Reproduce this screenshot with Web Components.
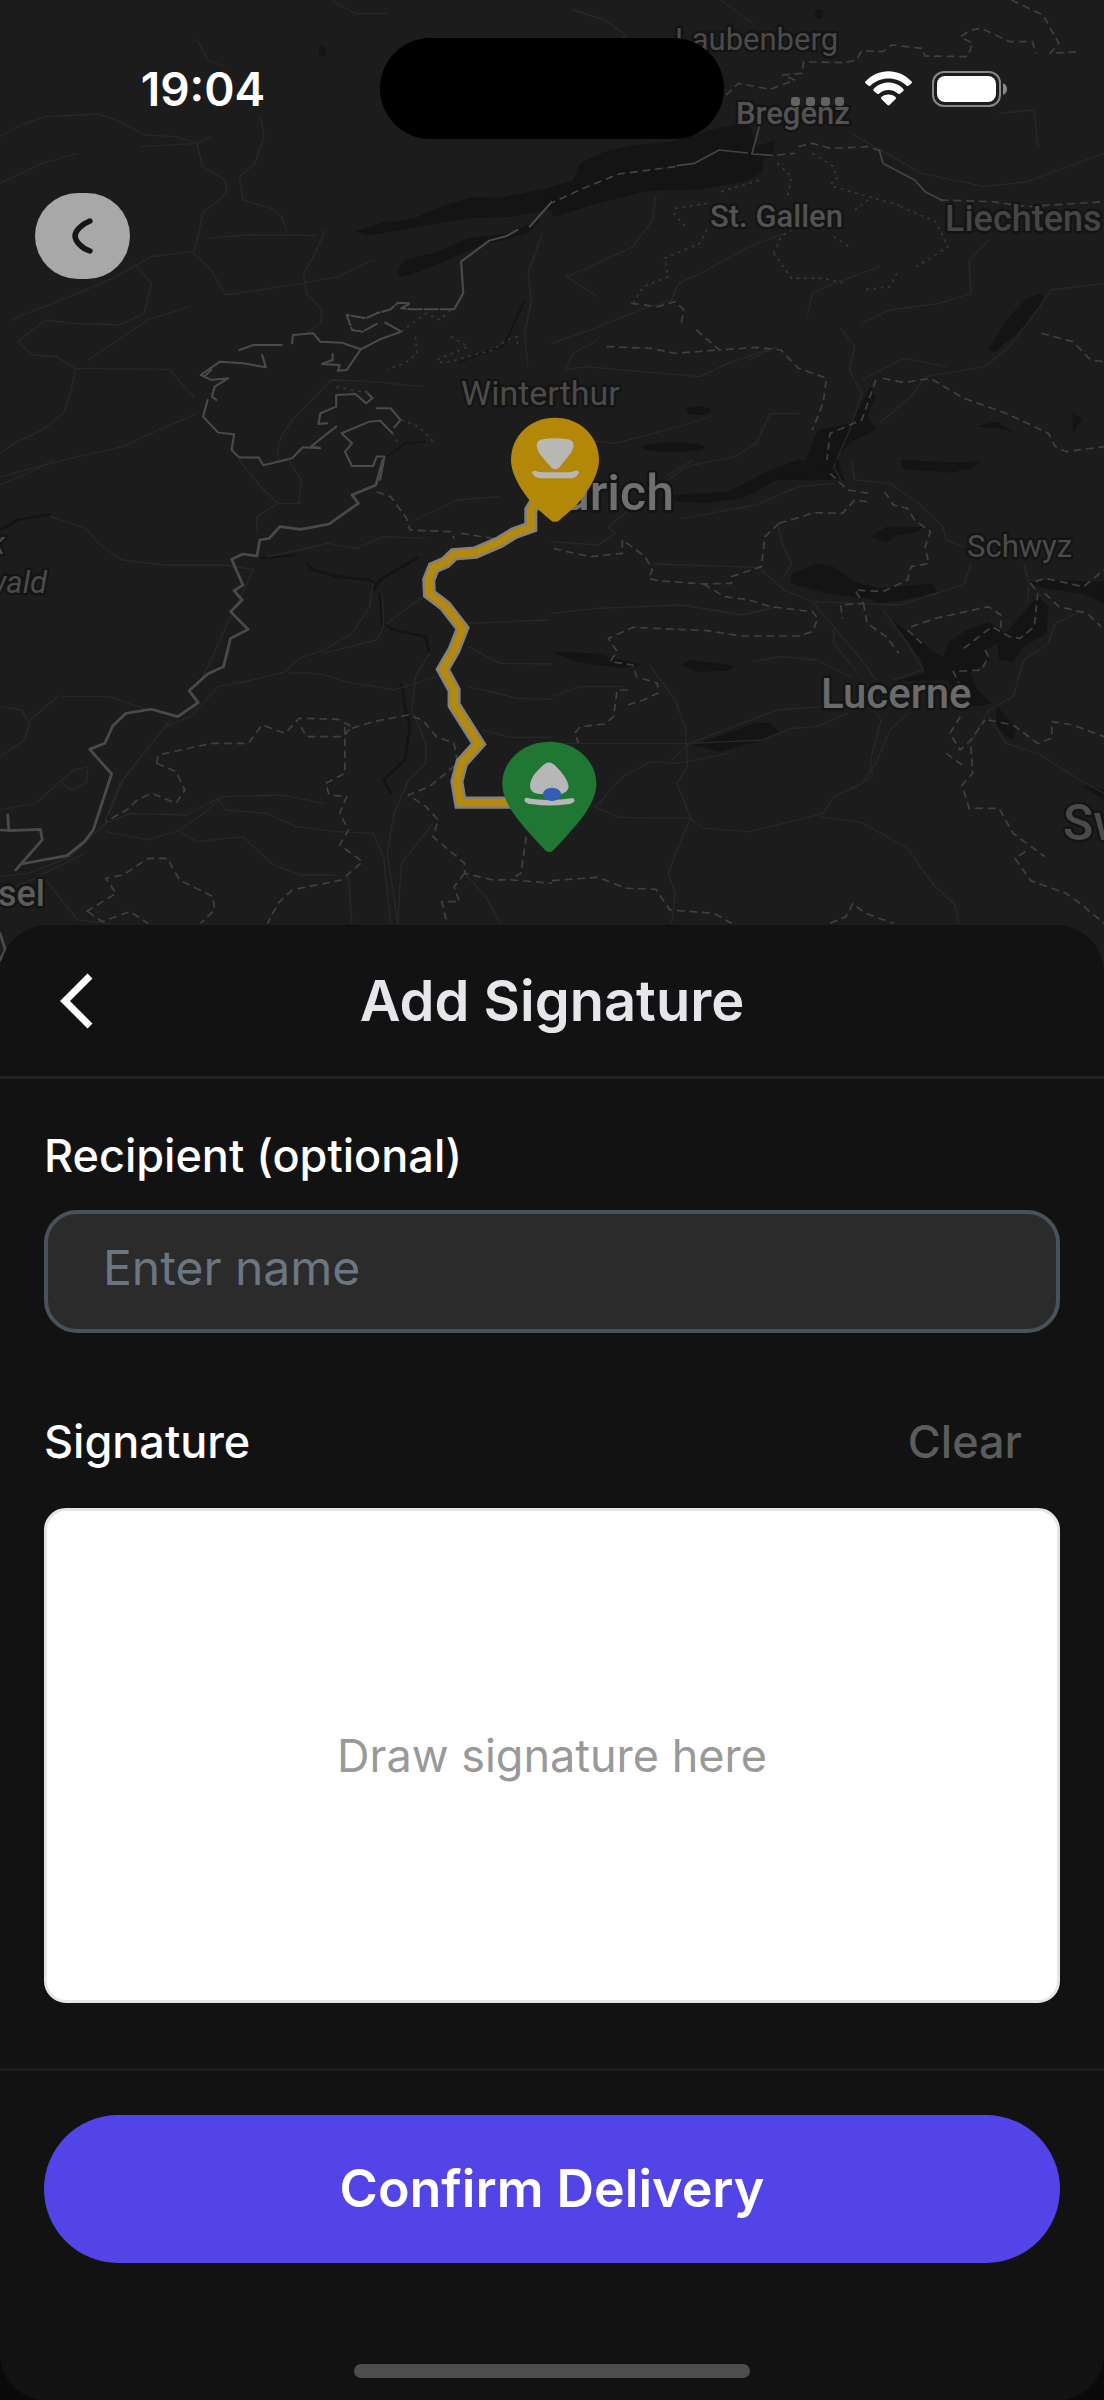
<!DOCTYPE html>
<html lang="en">
<head>
<meta charset="utf-8">
<meta name="viewport" content="width=device-width, initial-scale=1">
<title>Add Signature</title>
<style>
  html { background: #0a0a0a; }
  body { margin: 0; font-family: Inter, "Noto Sans", sans-serif; color: #fff; }
</style>
</head>
<body>
<delivery-screen>
  <route-map slot="map"></route-map>
  <status-bar slot="status" time="19:04"></status-bar>
  <round-back slot="back"></round-back>
  <bottom-sheet heading="Add Signature">
    <text-field label="Recipient (optional)" placeholder="Enter name"></text-field>
    <signature-pad label="Signature" placeholder="Draw signature here"></signature-pad>
    <primary-button slot="action">Confirm Delivery</primary-button>
  </bottom-sheet>
</delivery-screen>

<script>
class Base extends HTMLElement {
  constructor() { super(); this.attachShadow({ mode: "open" }); }
  connectedCallback() {
    this.shadowRoot.innerHTML = this.render();
    this.ready();
  }
  attr(n) { return this.getAttribute(n) || ""; }
  ready() {}
}

customElements.define("delivery-screen", class extends Base {
  render() { return `
    <style>
      :host { display: flex; flex-direction: column; min-height: 100vh; }
      .hero { display: grid; height: 985px; margin-bottom: -60px; overflow: hidden; background: #1c1c1c; }
      .hero > * { grid-area: 1 / 1; min-width: 0; }
      .over { display: flex; flex-direction: column; align-items: stretch; gap: 54px; padding-top: 38px; z-index: 1; }
      ::slotted(bottom-sheet) { flex: 1; }
    </style>
    <section class="hero">
      <div><slot name="map"></slot></div>
      <div class="over"><slot name="status"></slot><slot name="back"></slot></div>
    </section>
    <slot></slot>`; }
});

customElements.define("status-bar", class extends Base {
  render() { return `
    <style>
      :host { display: grid; grid-template-columns: 1fr auto 1fr; align-items: center; }
      time { text-align: center; padding-left: 26px; font-size: 46px; line-height: 56px; font-weight: 600; }
      .island { width: 344px; height: 101px; border-radius: 51px; background: #000; }
      .icons { display: flex; justify-content: flex-end; align-items: center; gap: 20px; padding-right: 97px; }
      svg { display: block; }
    </style>
    <time>${this.attr("time")}</time>
    <div class="island"></div>
    <div class="icons">
      <svg width="54" height="36" viewBox="0 0 54 36" fill="#626262">
        <rect x="0" y="26" width="9" height="9" rx="3"/><rect x="15" y="26" width="9" height="9" rx="3"/>
        <rect x="30" y="26" width="9" height="9" rx="3"/><rect x="44" y="26" width="9" height="9" rx="3"/>
      </svg>
      <svg width="47" height="35" viewBox="0 0 132 106" preserveAspectRatio="none" fill="#fff">
        <path d="M1 32C37-10 95-10 131 32Q133 35 130 38L122 45Q119 47 116 44C89 16 43 16 16 44Q13 47 10 45L2 38Q-1 35 1 32Z"/>
        <path d="M24 55C46 28 86 28 108 55Q110 58 108 60L98 69Q95 71 92 68C77 54 55 54 40 68Q37 71 34 69L24 60Q22 58 24 55Z"/>
        <path d="M46 79C57 69 75 69 86 79Q88 82 86 85L69 103Q66 106 63 103L46 85Q44 82 46 79Z"/>
      </svg>
      <svg width="75" height="36" viewBox="0 0 75 36">
        <rect x="1" y="1" width="67" height="34" rx="11" fill="none" stroke="#8b8787" stroke-width="2"/>
        <rect x="5" y="5" width="59" height="26" rx="8" fill="#fff"/>
        <path d="M71 12Q75 14 75 18Q75 22 71 24Z" fill="#8b8787"/>
      </svg>
    </div>`; }
});

customElements.define("round-back", class extends Base {
  render() { return `
    <style>
      :host { display: block; padding-left: 35px; }
      button { display: grid; place-items: center; width: 95px; height: 86px; padding: 0; border: 0; border-radius: 43px; background: #a8a8a8; cursor: pointer; }
    </style>
    <button type="button" aria-label="Back">
      <svg width="95" height="86" viewBox="0 0 270 258" preserveAspectRatio="none" fill="none" stroke="#161616" stroke-width="16" stroke-linecap="round" stroke-linejoin="round">
        <path d="M156 84C132 94 114 114 114 129C114 144 132 166 156 174"/>
      </svg>
    </button>`; }
});

/* The four map quarters are each drawn in their own tile units, scaled onto the canvas. */
customElements.define("route-map", class extends Base {
  render() { return `
    <style>
      :host { display: block; }
      svg { display: block; width: 100%; height: 985px; background: #1c1c1c; }
      .l { fill: none; stroke-linejoin: round; stroke-linecap: round; }
      .border { stroke: #4a4a4a; stroke-width: 6; }
      .dash { stroke: #404040; stroke-width: 5; stroke-dasharray: 22 14; stroke-linecap: butt; }
      .dot { stroke: #363636; stroke-width: 5; stroke-dasharray: 8 13; stroke-linecap: butt; }
      .road { stroke: #272727; stroke-width: 4; }
      .lake { fill: #141414; }
      .river { fill: none; stroke: #141414; stroke-width: 8; stroke-linejoin: round; }
      text { font-family: Roboto, "Noto Sans", sans-serif; fill: #525252; stroke: #141414; stroke-width: 5px; paint-order: stroke; stroke-linejoin: round; }
      .town { font-size: 31px; } .wide { font-size: 34px; }
      .mid { font-weight: 500; }
      .city { font-size: 42px; font-weight: 500; fill: #6a6a6a; }
      .big { font-size: 50px; font-weight: 500; fill: #707070; }
      .land { font-size: 36px; font-weight: 500; fill: #454545; }
      .dim { fill: #4b4b4b; }
    </style>
    <svg viewBox="0 0 1104 985" preserveAspectRatio="xMidYMin slice" role="img" aria-label="Delivery route map">
      <g transform="scale(.352 .3333)">
        <path class="lake" d="M1010 695L1085 668L1180 655L1250 620L1345 590L1420 595L1568 560V628L1450 650L1330 655L1200 678L1050 706ZM1125 820L1150 780L1230 760L1330 715L1450 700L1540 655L1500 700L1370 735L1270 780L1200 812L1140 832Z"/>
        <ellipse class="lake" cx="916" cy="152" rx="11" ry="16"/>
        <g class="l road">
          <path d="M0 410L60 375L130 350L280 342L340 365L410 405L500 410L560 430L575 500L640 540L645 580L575 640L565 700L550 755L430 770L330 830L220 880L30 960M740 350L750 410L725 490L680 530L690 600L770 625L800 650L815 690M590 715L700 705L900 706M0 550L120 490L220 460M925 690L890 770L862 820L870 880L915 930L910 970L870 1000M380 790L430 850L410 940L340 975L210 970L130 960L50 1025L90 1065L160 1070L215 1105L200 1180L180 1240L120 1290L40 1330L0 1360M550 760L600 810L640 885L800 860L960 830L1060 780M0 1430L220 1370L350 1340L450 1290L560 1240M215 1105L480 1108L550 1190M250 1080L420 960L540 920M790 1380Q780 1310 850 1240L940 1140L1060 1145L1200 1160M1540 700L1500 820L1510 900L1490 1000L1500 1100M400 440L560 430L600 410M560 120L590 180L640 200M940 0L1010 40L1100 40"/>
        </g>
        <path class="river" style="stroke-width:5" d="M1300 1090L1380 1055L1430 1040L1465 960L1490 900M1100 1370L1150 1330L1210 1325"/>
        <g class="l border">
          <path d="M1568 605L1505 680M1470 690L1440 708L1390 722L1310 785L1316 880L1292 925M570 1125L600 1140L648 1135L610 1160L602 1190L615 1200M590 1200L577 1250L620 1298L665 1303L658 1350L680 1373L735 1373L748 1396L830 1375L860 1342L910 1345L885 1338L955 1280M955 1220V1185L1010 1182L1040 1210L1058 1195L1040 1175M905 1270L910 1240L950 1222M905 1272L930 1270M1070 1225H1110L1138 1260L1120 1282M970 1300L1050 1265L1080 1262L1115 1300M970 1300L1000 1330L980 1355L1000 1398H1060L1070 1370H1092L1080 1440M570 1125L625 1085L690 1090L755 1102L745 1065M680 1050L720 1035L800 1035M830 1030L832 1005L890 1000L910 1025L970 1028L1025 1048L985 1110L960 1112L965 1095L915 1092L945 1080L945 1062M1025 1048L1080 1018L1140 995L1095 968"/>
          <path stroke-dasharray="38 8" d="M1290 928H1170L1140 925L1165 910L1130 908L1110 928L1070 940L1040 955L985 945L1000 990L1030 995L1070 972M580 1130L600 1110"/>
        </g>
        <g class="l dot"><path d="M1140 995L1210 940L1250 960L1280 930M1180 1010L1185 1060L1150 1090L1100 1108M1280 1010L1330 1040L1240 1080L1260 1090L1400 1050L1440 1020L1470 1010V1040M1140 1260L1190 1280L1230 1325M955 1160L1050 1180M1115 1300L1130 1330"/></g>
      </g>

      <g transform="translate(552) scale(.352 .3333)">
        <path class="lake" d="M60 540L80 490L150 455L230 435L340 425L470 385L560 370L580 440L635 420L625 470L600 475L595 520L540 545L430 568L270 572L130 610L0 652V560ZM1390 880L1398 900L1340 980L1260 1055L1240 1050L1290 960L1350 895ZM905 1160L920 1190L895 1250L920 1290L850 1325L810 1370L830 1440H600L720 1385L755 1290L850 1270L880 1210ZM990 1380L1080 1392L1215 1385L1190 1408L1090 1412L1000 1400ZM1210 1280L1260 1265L1320 1300L1270 1285ZM1480 1235L1505 1260L1480 1300Z"/>
        <ellipse class="lake" cx="758" cy="42" rx="12" ry="16"/><ellipse class="lake" cx="345" cy="1342" rx="90" ry="15"/><ellipse class="lake" cx="415" cy="1232" rx="36" ry="13"/>
        <g class="l road"><path d="M295 590L285 660L230 740L110 800L40 830L130 890M0 1030L120 985L250 930L340 900L360 850L440 810L560 740L660 700M725 950L740 880L800 850L930 800M1240 720L1185 780L1190 880L1100 910L960 930L880 970M820 985L860 1040L845 1110L880 1180L850 1280L800 1400L820 1440M560 1080L640 1040L500 1090L420 1130L250 1115L100 1100L35 1110L60 1060L130 1020M0 1310L180 1330L360 1280L450 1250M620 1240L700 1240M620 1240L580 1330L520 1370L380 1400L330 1440M880 1140L1000 1075L1120 1100M930 1270L1020 1190L1060 1130L1230 1100L1300 1040L1420 870L1568 850M1568 460L1490 490L1350 545L1230 560L1050 520L850 400M1380 440L1370 330L1270 340M0 320L120 200L210 105L150 60L60 30M480 0L570 70"/></g>
        <g class="l dash">
          <path d="M495 285L530 250L620 268L690 240L655 225L710 220L715 185L830 188L865 180L880 152L940 155L965 135L1050 145L1060 168L1180 170L1195 130L1160 110L1190 90L1220 85L1300 125H1365L1375 160M1305 0L1395 45L1440 130L1415 160L1500 155M1105 600L1250 605L1350 620L1568 605M640 465L690 460M700 440L740 430L790 445L900 440L935 455M225 910L300 920L350 905L375 930L365 980M410 990L475 1050L580 1042L650 1050L700 1105L780 1135L770 1210L740 1290M155 1040L280 1045L350 1060L475 1050M940 1135L1000 1148L1075 1135L1170 1195L1290 1240L1410 1300L1430 1340L1460 1355L1568 1340M920 1140L880 1260L790 1300L780 1390L750 1400M1390 1000L1480 1025L1530 1080L1568 1085"/>
          <path style="stroke:#444" d="M350 500L190 522L100 560L0 608"/>
        </g>
        <path class="l" stroke="#444" stroke-width="5" d="M590 375L568 462L625 466M555 459L475 450L405 490L355 497M930 450L940 490L1030 540L1060 575L1110 602"/>
        <g class="l dot"><path d="M345 640L380 680M440 690L420 730L320 775L330 830L260 860L230 910M640 490L680 530L670 590M740 460L800 500L810 540L785 555M630 760L680 835L770 835L830 850M860 630L910 590M990 620L1090 665L1125 740L1040 798H1020M980 820L960 860L880 870M350 625L440 610M480 575L590 540M800 560L1000 620M630 760L650 710L680 690M800 710L850 745"/></g>
      </g>

      <g transform="translate(0 460) scale(.352 .3333)">
        <path class="river" d="M0 210L50 180L145 162M740 295L840 285M870 310L890 330L960 350L1050 360L1075 380M1060 390L1080 360L1190 290M1080 400L1085 490L1120 510L1210 530L1220 580M1140 670L1150 740L1165 800L1150 900L1090 960L1110 1000"/>
        <g class="l road">
          <path d="M0 75L100 30L150 0M145 170L245 205L280 250L345 300L470 315L640 315L720 330L650 480L600 600L560 680M680 0L740 80L790 130L850 130L855 60L820 0M760 290L850 270L930 250L1010 265L1090 230L1210 235M730 220V170L790 130M1060 370L1050 440L1000 520L920 570L850 595L810 635L720 660L620 680L540 770L470 800L340 970L300 1080M1085 400L1090 500L1070 540L920 580M820 640Q900 630 980 665L1120 690L1240 650M1100 490L1200 410M180 710H310L420 750M0 740L60 750L85 790L70 840L0 890M85 780L170 705M0 1050L100 1030L210 930L250 920L245 970L200 990L170 960M0 1250L80 1240L200 1190L300 1090L370 1060L530 1065L620 1015L640 1050L760 1060L840 1100L950 1115L1060 1120L1090 1190L1110 1390M300 1115L420 1140L500 1115L580 1060L630 1010L800 1005L920 1030M500 1110L560 1145L690 1130L770 1210L850 1245L950 1245M480 785L350 960L310 1060M0 1300L90 1260L240 1180M1220 580L1180 650L1170 750L1210 850V910L1160 960L1120 1060L1100 1180L1130 1390M1230 1090L1140 1210L1130 1390M1330 560L1420 610L1568 612M1330 680L1470 715L1568 718M1370 810L1450 832H1568M1180 180L1300 120L1420 110M1320 1240L1380 1310L1420 1390M990 1250L1000 1390M130 1260L220 1380L310 1390M1330 490L1560 480"/>
        </g>
        <g class="l border">
          <path style="stroke-width:8" d="M1088 0L1068 75L1000 105L1018 130L935 192L855 208L795 200L765 235L738 240L730 288L690 282L658 298L690 375L665 392L688 420L655 455L705 508L655 535L635 620L590 642L537 692L563 728L505 770L430 748L358 760L320 798L298 850L255 868L317 942L265 1110L240 1145L190 1187L60 1212L120 1140L115 1108L25 1112L22 1065M0 1110L35 1112M60 1212L45 1230M0 1500L15 1470L0 1420"/>
        </g>
        <g class="l dash">
          <path d="M1070 95L1110 110L1155 175L1165 210L1280 215L1290 235M1310 220L1430 240M445 910L500 935L525 990L500 1030L430 1000L390 1020L360 1050L300 1085M445 910L450 885L600 850H705L745 795L810 820L850 775L960 778L1000 800L975 830L870 830L850 790M980 800L980 940L925 970L935 1005L985 1010L965 1060L990 1110L965 1155L1030 1205L970 1260L830 1290L790 1330L760 1390M1000 805L1060 785L1160 765L1200 780L1240 830L1290 850L1300 910L1220 980L1160 1005L1210 1040L1245 1080L1230 1130L1320 1210V1240L1400 1260H1455L1568 1270M1495 1130L1480 1240L1455 1255M1320 1240L1290 1280L1305 1325H1255L1270 1390M245 1355L330 1300L300 1255L350 1245L420 1195L475 1195L510 1260L605 1310L610 1350L570 1390M250 1355L290 1385L370 1355L420 1390"/>
        </g>
      </g>

      <g transform="translate(552 460) scale(.352 .3333)">
        <path class="lake" d="M350 125L345 105L500 95L620 30L700 0H830L740 35L640 60L540 115L440 128ZM990 0L1215 10L1140 38L1000 28ZM905 230L950 200L1050 200L1040 215L980 225L950 248ZM680 345L750 310L800 320L860 365L930 385L1080 370L1095 395L1000 420L930 430L900 415L850 410L780 400L680 370ZM0 575L120 580L260 615L200 625L70 605ZM365 615L400 600L520 618L500 632L410 635ZM400 855L470 830L580 788L620 790L645 815L580 845L480 875ZM965 480L1050 545L1110 595L1130 545L1170 515L1240 485L1290 520L1345 450L1380 410L1410 440L1405 520L1340 560L1310 605L1270 600L1265 550L1230 570L1240 600L1190 640L1210 690L1250 730L1200 740L1120 660L970 665L1060 640L1050 600ZM1265 740L1320 800L1310 840L1290 830L1260 790ZM1350 370L1400 360L1568 365V430L1500 400L1400 385ZM1500 975L1568 990V1020Z"/>
        <g class="l road"><path d="M330 45L400 0M0 460L130 445L370 435L540 465L640 440M290 312L590 322M0 245L130 255L180 220L160 200L220 150M370 175L580 135L700 80L800 70M640 190L655 250L680 310L660 350M595 330L660 390L740 425L800 500L880 600L920 660M740 425L850 430L990 435L1090 400L1170 375L1190 315M1340 310L1355 370L1350 430M940 450L1010 550L1055 630L970 660M800 510V550L870 640M0 710L80 680L200 680M570 605L650 590L750 600L850 650M380 855L640 750L770 740M340 900L390 850L600 840L680 805L750 800L840 760M280 620L350 720L380 810L385 920L355 970L395 1075L370 1130L330 1240L350 1300L340 1390M125 1040L200 950L280 905L360 910L500 880M0 850L390 850M120 1040L190 1072L390 1075L430 1105L560 1115L700 1080L770 1060L800 1010L880 970L920 910L960 810L1010 760M900 730L935 780L905 900L910 950L850 990M760 1070L880 1088L1010 1165L1080 1270L1145 1335L1155 1390M1510 450L1430 490L1410 550L1340 600L1310 710L1240 750L1190 850M1240 770L1290 850L1380 880L1500 960L1568 1000M850 0L860 60L960 70L1040 130L1110 200L1120 240L1170 260"/></g>
        <g class="l dash"><path d="M790 40L840 90L900 100M645 190L710 170L740 158L825 160L860 120L900 125M645 190L605 230L595 320L510 350V370L430 372L300 362L275 355L285 330L265 290L200 240V280L110 290L0 265M430 372L490 410L560 420L620 440L740 455L755 475L740 515L700 528H540L440 512L230 502L160 535L185 575L165 605L230 615L240 650L300 670V700L260 720L215 735M215 690H185L175 770L150 792L80 800L65 820L75 850M945 95L970 135L1010 145L1030 180L1075 215L1060 260L1070 310L1020 320L1010 360L940 395L860 390L885 430L820 435L825 475M885 430L895 490L950 530L985 580M1010 510L1050 550M1020 500L1090 475L1240 440L1275 465L1275 510M1170 565L1250 500L1300 530L1330 535L1370 500L1380 400L1360 370L1400 355L1510 380L1568 330M1400 400L1440 440L1520 460L1560 500M1230 570L1240 590L1220 630L1140 635L1160 680M1160 770L1130 820L1160 870L1190 840L1230 780M1120 880L1165 915M1190 860L1195 940L1165 975L1185 1045H1270L1310 1120L1400 1190M1345 1175L1315 1195L1360 1262L1460 1300L1500 1330L1568 1390M1240 780L1310 795L1380 850L1420 835V785L1480 795L1568 830M0 1262L130 1252L210 1285L295 1288L335 1350L460 1360L510 1390M790 1390L835 1370L855 1330L890 1360L970 1390"/></g>
      </g>

      <g class="l" transform="translate(0 460) scale(.352 .3333)">
        <path stroke="#85817a" stroke-width="37" style="stroke-linejoin:miter;stroke-linecap:butt" d="M1525 120L1508 150V202L1460 220L1420 246L1350 278L1290 283L1265 308L1232 323L1218 360L1220 402L1265 438L1314 505L1290 570L1258 628L1290 690V735L1360 852L1312 908L1298 965L1308 1028H1480"/>
        <path stroke="#b38a0d" stroke-width="22" style="stroke-linejoin:miter;stroke-linecap:butt" d="M1525 120L1508 150V202L1460 220L1420 246L1350 278L1290 283L1265 308L1232 323L1218 360L1220 402L1265 438L1314 505L1290 570L1258 628L1290 690V735L1360 852L1312 908L1298 965L1308 1028H1480"/>
      </g>

      <text class="town dim" x="675" y="50">Laubenberg</text>
      <text class="town mid" x="736" y="124">Bregenz</text>
      <text class="town mid" x="710" y="227">St. Gallen</text>
      <text class="land" x="945" y="231">Liechtens</text>
      <text class="wide dim" x="461" y="405">Winterthur</text>
      <text class="big" x="674" y="510" text-anchor="end">ürich</text>
      <text class="town dim" x="967" y="557">Schwyz</text>
      <text class="city" x="821" y="708">Lucerne</text>
      <text class="big" x="1063" y="840" style="fill:#4a4a4a">Sw</text>
      <text class="town dim" x="47" y="593" text-anchor="end" font-style="italic">wald</text>
      <text class="town dim" x="5" y="554" text-anchor="end" font-style="italic">k</text>
      <text class="land" x="45" y="906" text-anchor="end" style="fill:#5c5c5c">sel</text>

      <g transform="translate(480 400) scale(.3333)">
        <path fill="#b38707" d="M225 53C150 53 93 108 93 180C93 230 135 288 170 325L214 362Q225 369 236 362L280 325C315 288 357 230 357 180C357 108 300 53 225 53Z"/>
        <path fill="#b9b7b3" d="M170 138Q170 119 190 118Q225 112 262 118Q281 119 281 138Q278 155 262 172Q247 192 237 203Q226 212 215 203Q203 192 190 175Q172 155 170 138ZM156 218Q158 210 168 213Q176 217 190 217H262Q276 217 286 212Q296 210 297 219Q292 228 282 233Q276 235 268 235H184Q164 234 156 218Z"/>
      </g>
      <g transform="translate(480 730) scale(.3333)">
        <path fill="#1f7733" d="M208 35C130 35 67 90 67 162C67 225 130 290 190 355Q198 366 208 366Q218 366 226 355C286 290 349 225 349 162C349 90 286 35 208 35Z"/>
        <path fill="#b6b7b6" d="M150 170C150 140 175 118 194 102Q207 93 221 103C240 120 266 150 266 172Q262 188 240 193L176 192Q152 188 150 170ZM133 211Q134 202 144 204Q158 209 208 210Q258 209 272 205Q283 202 284 212Q278 222 262 223Q208 230 158 223Q138 223 133 211Z"/>
        <ellipse cx="216" cy="193" rx="27" ry="20" fill="#325fb5"/>
      </g>
    </svg>`; }
});

customElements.define("bottom-sheet", class extends Base {
  render() { return `
    <style>
      :host { display: flex; flex-direction: column; position: relative; border-radius: 48px 48px 46px 46px; background: #121212; z-index: 2; }
      header { display: grid; grid-template-columns: 96px 1fr 96px; align-items: center; height: 151px; padding: 0 29px; border-bottom: 3px solid #242424; }
      header button { display: grid; place-items: center; width: 96px; height: 96px; padding: 0; border: 0; background: none; cursor: pointer; }
      h1 { margin: 0; text-align: center; font-size: 56px; line-height: 68px; font-weight: 600; color: #e5e7eb; }
      .body { display: flex; flex-direction: column; gap: 83px; padding: 51px 44px 65px; }
      footer { padding: 44px 44px 0; border-top: 3px solid #1c1c1c; }
      .home { width: 396px; height: 14px; margin: auto auto 22px; border-radius: 7px; background: #4d4d4d; }
    </style>
    <header>
      <button type="button" aria-label="Close sheet">
        <svg width="34" height="56" viewBox="0 0 34 56" fill="none" stroke="#fff" stroke-width="7"><path d="M30 3L5 28L30 53"/></svg>
      </button>
      <h1>${this.attr("heading")}</h1>
    </header>
    <div class="body"><slot></slot></div>
    <footer><slot name="action"></slot></footer>
    <div class="home"></div>`; }
});

customElements.define("text-field", class extends Base {
  render() { return `
    <style>
      :host { display: flex; flex-direction: column; gap: 28px; }
      label { font-size: 45px; line-height: 52px; font-weight: 500; }
      input { box-sizing: border-box; width: 100%; height: 123px; padding: 0 55px 8px; border: 4px solid #4a515b; border-radius: 33px; background: #2b2b2b; color: #fff; font: 400 48px/56px Inter, "Noto Sans", sans-serif; outline: 0; }
      input::placeholder { color: #6b7680; opacity: 1; }
    </style>
    <label for="field">${this.attr("label")}</label>
    <input id="field" type="text" placeholder="${this.attr("placeholder")}">`; }
});

customElements.define("signature-pad", class extends Base {
  render() { return `
    <style>
      :host { display: flex; flex-direction: column; gap: 40px; }
      .row { display: flex; justify-content: space-between; align-items: center; padding-right: 38px; }
      h2, button { margin: 0; padding: 0; font-family: inherit; font-size: 45px; line-height: 52px; font-weight: 500; }
      button { border: 0; background: none; color: #5c5c5c; cursor: pointer; }
      .pad { display: grid; box-sizing: border-box; height: 495px; border: 3px solid #e6e6e6; border-radius: 22px; background: #fff; overflow: hidden; }
      .pad > * { grid-area: 1 / 1; }
      p { place-self: center; margin: 0; font-size: 45px; line-height: 52px; color: #999; }
      canvas { width: 100%; height: 100%; min-width: 0; min-height: 0; touch-action: none; }
    </style>
    <div class="row"><h2 id="t">${this.attr("label")}</h2><button type="button">Clear</button></div>
    <div class="pad"><p>${this.attr("placeholder")}</p><canvas aria-labelledby="t"></canvas></div>`; }
  ready() {
    const c = this.shadowRoot.querySelector("canvas"), p = this.shadowRoot.querySelector("p");
    let pen = null;
    c.addEventListener("pointerdown", e => {
      if (p.style.visibility !== "hidden") { c.width = c.clientWidth; c.height = c.clientHeight; p.style.visibility = "hidden"; }
      pen = c.getContext("2d"); pen.lineWidth = 5; pen.lineCap = "round";
      pen.beginPath(); pen.moveTo(e.offsetX, e.offsetY);
    });
    c.addEventListener("pointermove", e => { if (pen) { pen.lineTo(e.offsetX, e.offsetY); pen.stroke(); } });
    c.addEventListener("pointerup", () => { pen = null; });
    this.shadowRoot.querySelector("button").addEventListener("click", () => {
      c.getContext("2d").clearRect(0, 0, c.width, c.height); p.style.visibility = "";
    });
  }
});

customElements.define("primary-button", class extends Base {
  render() { return `
    <style>
      :host { display: block; }
      button { display: block; width: 100%; height: 148px; padding: 0; border: 0; border-radius: 74px; background: #5244e6; color: #fff; font: 600 52px/60px Inter, "Noto Sans", sans-serif; cursor: pointer; }
    </style>
    <button type="button"><slot></slot></button>`; }
});
</script>
</body>
</html>
